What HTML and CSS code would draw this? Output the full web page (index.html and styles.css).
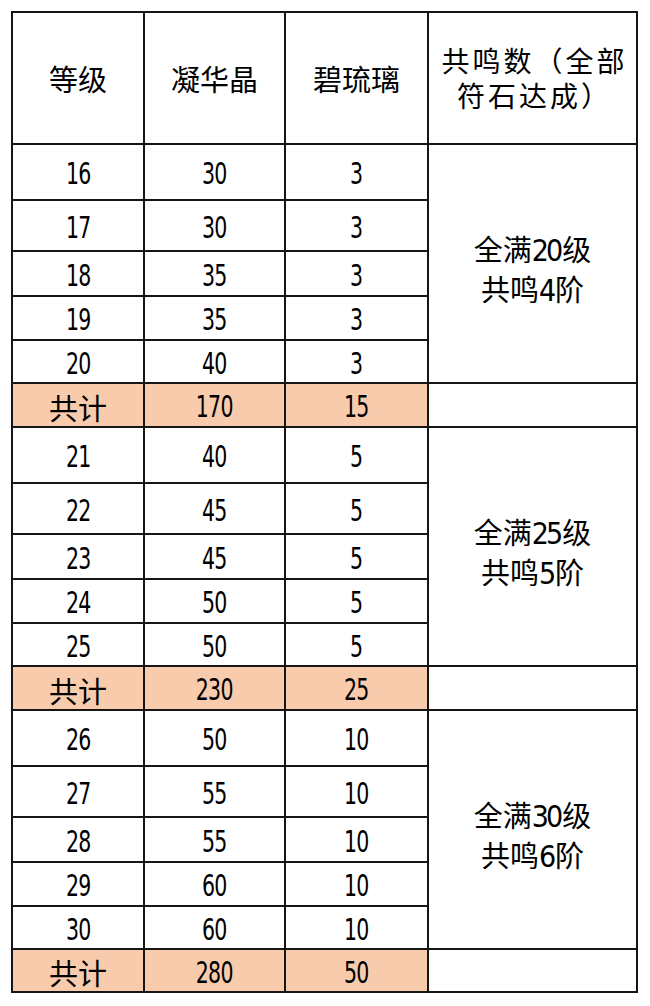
FILE: index.html
```html
<!DOCTYPE html>
<html lang="zh">
<head>
<meta charset="utf-8">
<title>共鸣表</title>
<link rel="stylesheet" href="styles.css">
</head>
<body>
<div class="sheet">
  <div class="cell head">等级</div>
  <div class="cell head">凝华晶</div>
  <div class="cell head">碧琉璃</div>
  <div class="cell head wide"><span class="ln">共鸣数（全部</span><span class="ln">符石达成）</span></div>

  <div class="cell"><span class="n">16</span></div><div class="cell"><span class="n">30</span></div><div class="cell"><span class="n">3</span></div>
  <div class="cell merged"><span class="ln">全满<span class="num">20</span>级</span><span class="ln">共鸣<span class="num">4</span>阶</span></div>
  <div class="cell"><span class="n">17</span></div><div class="cell"><span class="n">30</span></div><div class="cell"><span class="n">3</span></div>
  <div class="cell"><span class="n">18</span></div><div class="cell"><span class="n">35</span></div><div class="cell"><span class="n">3</span></div>
  <div class="cell"><span class="n">19</span></div><div class="cell"><span class="n">35</span></div><div class="cell"><span class="n">3</span></div>
  <div class="cell"><span class="n">20</span></div><div class="cell"><span class="n">40</span></div><div class="cell"><span class="n">3</span></div>
  <div class="cell total cjk">共计</div><div class="cell total"><span class="n">170</span></div><div class="cell total"><span class="n">15</span></div><div class="cell"></div>

  <div class="cell"><span class="n">21</span></div><div class="cell"><span class="n">40</span></div><div class="cell"><span class="n">5</span></div>
  <div class="cell merged"><span class="ln">全满<span class="num">25</span>级</span><span class="ln">共鸣<span class="num">5</span>阶</span></div>
  <div class="cell"><span class="n">22</span></div><div class="cell"><span class="n">45</span></div><div class="cell"><span class="n">5</span></div>
  <div class="cell"><span class="n">23</span></div><div class="cell"><span class="n">45</span></div><div class="cell"><span class="n">5</span></div>
  <div class="cell"><span class="n">24</span></div><div class="cell"><span class="n">50</span></div><div class="cell"><span class="n">5</span></div>
  <div class="cell"><span class="n">25</span></div><div class="cell"><span class="n">50</span></div><div class="cell"><span class="n">5</span></div>
  <div class="cell total cjk">共计</div><div class="cell total"><span class="n">230</span></div><div class="cell total"><span class="n">25</span></div><div class="cell"></div>

  <div class="cell"><span class="n">26</span></div><div class="cell"><span class="n">50</span></div><div class="cell"><span class="n">10</span></div>
  <div class="cell merged"><span class="ln">全满<span class="num">30</span>级</span><span class="ln">共鸣<span class="num">6</span>阶</span></div>
  <div class="cell"><span class="n">27</span></div><div class="cell"><span class="n">55</span></div><div class="cell"><span class="n">10</span></div>
  <div class="cell"><span class="n">28</span></div><div class="cell"><span class="n">55</span></div><div class="cell"><span class="n">10</span></div>
  <div class="cell"><span class="n">29</span></div><div class="cell"><span class="n">60</span></div><div class="cell"><span class="n">10</span></div>
  <div class="cell"><span class="n">30</span></div><div class="cell"><span class="n">60</span></div><div class="cell"><span class="n">10</span></div>
  <div class="cell total cjk">共计</div><div class="cell total"><span class="n">280</span></div><div class="cell total"><span class="n">50</span></div><div class="cell"></div>
</div>
</body>
</html>
```

FILE: styles.css
```css
html, body {
  margin: 0;
  padding: 0;
  background: #ffffff;
}

body {
  padding: 11px 0 0 11px;
  font-family: "DejaVu Sans", "Noto Sans CJK SC", sans-serif;
  font-stretch: condensed;
  font-weight: 400;
  color: #000;
}

.sheet {
  display: grid;
  grid-template-columns: 132px 141px 143px 209px;
  grid-template-rows:
    132px
    56px 51px 45px 44px 43px 44px
    56px 51px 45px 44px 43px 44px
    56px 51px 45px 44px 43px 43px;
  width: max-content;
  border-top: 2px solid #151515;
  border-left: 2px solid #151515;
}

.cell {
  display: flex;
  align-items: center;
  justify-content: center;
  text-align: center;
  border-right: 2px solid #151515;
  border-bottom: 2px solid #151515;
  font-size: 30px;
  line-height: 1;
  padding-top: 4px;
  box-sizing: border-box;
}

.n {
  display: inline-block;
  letter-spacing: -1px;
  transform: scaleX(0.76);
}

.head,
.cjk {
  font-family: "Noto Sans CJK SC", sans-serif;
  font-stretch: normal;
  font-weight: 400;
  font-size: 29px;
}

.head {
  padding-top: 0;
}

.head.wide,
.merged {
  flex-direction: column;
}

.head.wide {
  font-size: 28px;
  letter-spacing: 3px;
  padding: 0 0 0 4px;
}

.head.wide .ln {
  display: block;
  height: 35px;
  line-height: 35px;
}

.merged {
  grid-row: span 5;
  font-family: "Noto Sans CJK SC", sans-serif;
  font-stretch: normal;
  font-weight: 400;
  font-size: 29px;
  padding-top: 8px;
}

.merged .ln {
  display: block;
  height: 40px;
  line-height: 40px;
}

.num {
  font-family: "DejaVu Sans", sans-serif;
  font-stretch: condensed;
  font-weight: 400;
  font-size: 30px;
  letter-spacing: -3px;
  margin-right: 2px;
}

.total {
  background: #f8cbad;
}
```
